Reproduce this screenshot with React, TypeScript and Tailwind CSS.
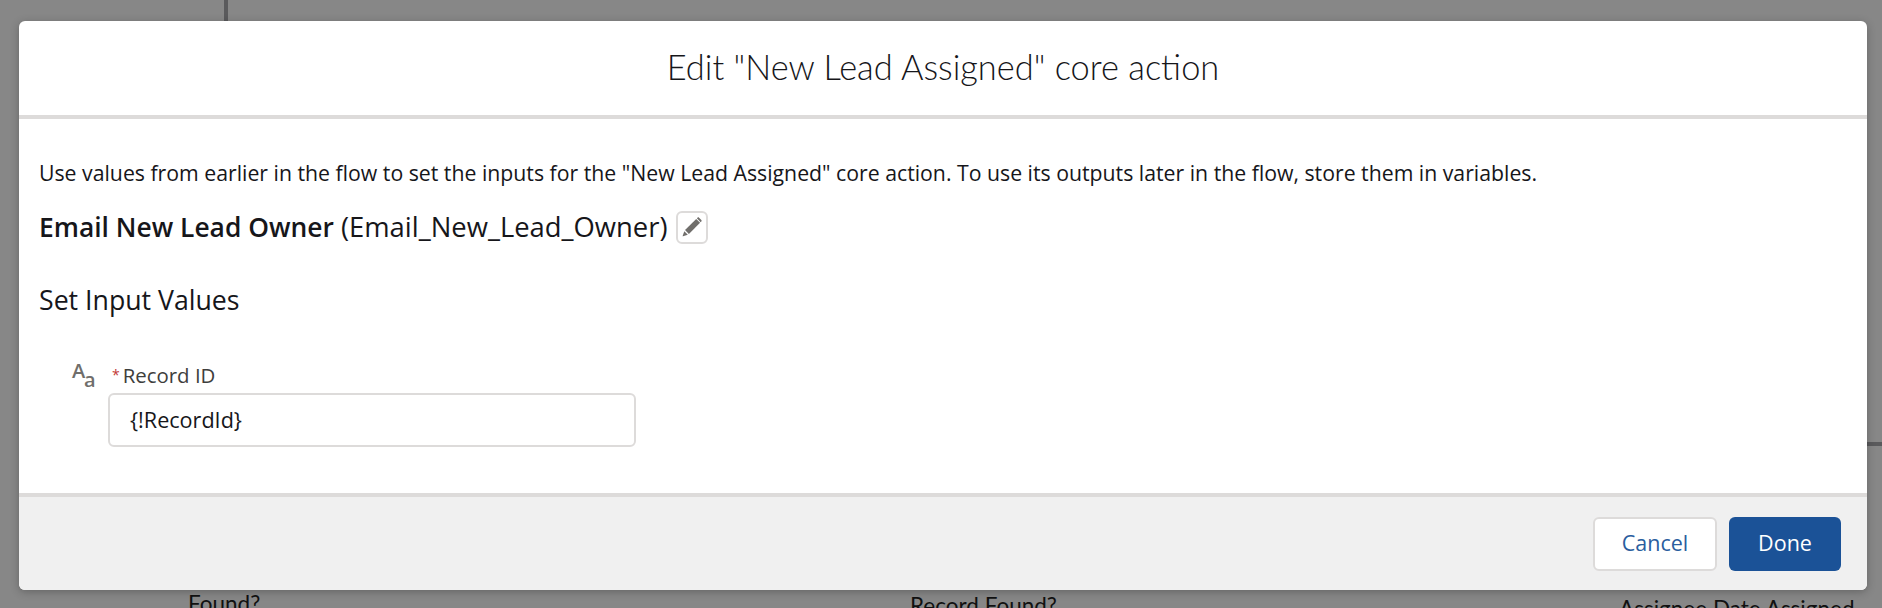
const bodyFont = "font-['Open_Sans','Liberation_Sans',sans-serif]";

function PencilIcon() {
  return (
    <svg viewBox="0 0 24 24" className="w-[22px] h-[22px] fill-[#706e6b]">
      <path d="M16.6 3.2 20.8 7.4 8.6 19.6 4.4 15.4Z" />
      <path d="M18 1.8c.5-.5 1.2-.5 1.7 0l2.5 2.5c.5.5.5 1.2 0 1.7l-.7.7-4.2-4.2Z" />
      <path d="M3.6 16.6 7.4 20.4 2.2 22.2c-.3.1-.5-.1-.4-.4Z" />
    </svg>
  );
}

export default function App() {
  return (
    <div className={`relative w-[1882px] h-[608px] overflow-hidden bg-[#878787] pt-[21px] pl-[19px] ${bodyFont}`}>
      <div className="absolute left-[224px] top-0 w-[4px] h-[21px] bg-[#5a5a5c]" />
      <div className="absolute left-[1867px] top-[442px] w-[15px] h-[4px] bg-[#5a5a5c]" />
      <span className="absolute left-[188px] top-[591px] font-['Lato',sans-serif] text-[22.5px] leading-[26px] text-[#111]">Found?</span>
      <span className="absolute left-[910px] top-[593px] font-['Lato',sans-serif] text-[22.5px] leading-[26px] text-[#111]">Record Found?</span>
      <span className="absolute left-[1619px] top-[596px] font-['Lato',sans-serif] text-[22.5px] leading-[26px] text-[#111]">Assignee Date Assigned</span>

      <div className="relative w-[1848px] h-[569px] flex flex-col rounded-[6px] overflow-hidden bg-white shadow-[0_2px_8px_rgba(0,0,0,0.25)]">
        <header className="h-[98px] shrink-0 flex items-center justify-center border-b-4 border-[#dddbda]">
          <h1 className="font-['Lato',sans-serif] font-light text-[34.4px] leading-[40px] text-[#16161a] mb-[3px]">
            Edit "New Lead Assigned" core action
          </h1>
        </header>
        <main className="flex-1 px-[20px] pt-[39px] text-[#16161a]">
          <p className="text-[21.25px] leading-[30px]">
            Use values from earlier in the flow to set the inputs for the "New Lead Assigned" core action. To use its outputs later in the flow, store them in variables.
          </p>
          <div className="flex items-center mt-[22px] h-[34px]">
            <span className="text-[27.4px] leading-[34px] whitespace-nowrap"><b className="font-semibold text-[26.4px]">Email New Lead Owner</b> (Email_New_Lead_Owner)</span>
            <button className="ml-[8px] shrink-0 w-[32px] h-[33px] flex items-center justify-center rounded-[6px] border-2 border-[#dddbda] bg-white">
              <PencilIcon />
            </button>
          </div>
          <h2 className="mt-[38px] text-[26.7px] leading-[36px] font-normal">Set Input Values</h2>
          <div className="flex mt-[44px]">
            <div className="w-[69px] relative shrink-0">
              <span className="absolute left-[33px] top-[-4px] text-[20px] leading-[26px] font-semibold text-[#706e6b]">A</span>
              <span className="absolute left-[45px] top-[5px] text-[20px] leading-[26px] font-semibold text-[#706e6b]">a</span>
            </div>
            <div>
              <label className="flex items-center pl-[4px] text-[20.4px] leading-[26px] text-[#3e3e3c]"><span className="text-[#c23934] text-[14px] mr-[3px]">*</span>Record ID</label>
              <div className="mt-[5px] w-[528px] h-[54px] flex items-center px-[20px] rounded-[6px] border-2 border-[#dddbda] bg-white text-[21.6px] text-[#16161a]">{"{!RecordId}"}</div>
            </div>
          </div>
        </main>
        <footer className="h-[97px] shrink-0 flex items-center justify-end gap-[12px] pr-[26px] bg-[#f0f0f0] border-t-4 border-[#dddbda]">
          <button className="w-[124px] h-[54px] rounded-[6px] border-2 border-[#dddbda] bg-white text-[21.5px] text-[#2a5d9e]">Cancel</button>
          <button className="w-[112px] h-[54px] rounded-[6px] bg-[#1b5297] text-[21.5px] font-medium text-white">Done</button>
        </footer>
      </div>
    </div>
  );
}
